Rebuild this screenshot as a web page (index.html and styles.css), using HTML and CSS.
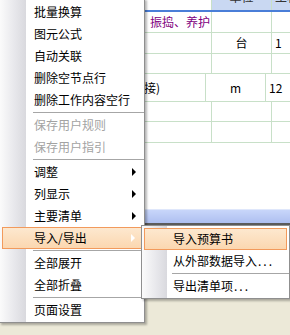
FILE: index.html
```html
<!DOCTYPE html>
<html lang="zh-CN">
<head>
  <meta charset="UTF-8">
  <title>清单菜单</title>
  <link rel="stylesheet" href="styles.css">
</head>
<body>

  <div class="sheet">
    <div class="row head">
      <div class="cell c0"></div>
      <div class="cell c1"></div>
      <div class="cell c2 hd"><span>单位</span></div>
      <div class="cell c3 hd"><span>工程</span></div>
    </div>
    <div class="row r1">
      <div class="cell c0"></div>
      <div class="cell c1 purple">振捣、养护</div>
      <div class="cell c2"></div>
      <div class="cell c3"></div>
    </div>
    <div class="row r2">
      <div class="cell c0"></div>
      <div class="cell c1"></div>
      <div class="cell c2 mid">台</div>
      <div class="cell c3">1</div>
    </div>
    <div class="row r3">
      <div class="cell c0"></div>
      <div class="cell c1"></div>
      <div class="cell c2"></div>
      <div class="cell c3"></div>
    </div>
    <div class="row r4">
      <div class="cell c0"></div>
      <div class="cell c1 flush">接)</div>
      <div class="cell c2 mid">m</div>
      <div class="cell c3">12</div>
    </div>
    <div class="row r5">
      <div class="cell c0"></div>
      <div class="cell c1"></div>
      <div class="cell c2"></div>
      <div class="cell c3"></div>
    </div>
    <div class="row r6">
      <div class="cell c0"></div>
      <div class="cell c1"></div>
      <div class="cell c2"></div>
      <div class="cell c3"></div>
    </div>
    <div class="blank"></div>
    <div class="scrollbar"></div>
  </div>

  <div class="menu main">
    <div class="item">批量换算</div>
    <div class="item">图元公式</div>
    <div class="item">自动关联</div>
    <div class="item">删除空节点行</div>
    <div class="item">删除工作内容空行</div>
    <div class="sep"></div>
    <div class="item disabled">保存用户规则</div>
    <div class="item disabled">保存用户指引</div>
    <div class="sep"></div>
    <div class="item sub">调整<i class="arrow"></i></div>
    <div class="item sub">列显示<i class="arrow"></i></div>
    <div class="item sub">主要清单<i class="arrow"></i></div>
    <div class="item sub hot">导入/导出<i class="arrow"></i></div>
    <div class="sep"></div>
    <div class="item">全部展开</div>
    <div class="item">全部折叠</div>
    <div class="sep"></div>
    <div class="item">页面设置</div>
  </div>

  <div class="menu submenu">
    <div class="item hot">导入预算书</div>
    <div class="item">从外部数据导入<span class="dots">...</span></div>
    <div class="sep"></div>
    <div class="item">导出清单项<span class="dots">...</span></div>
  </div>

</body>
</html>
```

FILE: styles.css
```css
body {
  margin: 0;
  background: #ece9d8;
  font-family: "Noto Sans CJK SC", "Liberation Sans", sans-serif;
  font-size: 12px;
  color: #000;
  position: relative;
  height: 335px;
  overflow: hidden;
}

/* spreadsheet behind the menus */
.sheet {
  background: #fff;
  width: 290px;
}

.row {
  display: flex;
  border-bottom: 1px solid #c8e0c8;
}

.cell {
  border-right: 1px solid #c8e0c8;
  line-height: 20px;
  white-space: nowrap;
  overflow: hidden;
}

.c0 { width: 144px; border-right: none; }
.c1 { width: 61px; padding-left: 6px; }
.c2 { width: 59px; }
.c3 { flex: 1; border-right: none; padding-left: 3px; }

.head {
  height: 10px;
  border-bottom: 2px solid #4a7ed8;
}

.head .cell { line-height: 10px; }

.hd {
  background: #c9d8f2;
  color: #333;
  text-align: center;
}

.hd span {
  display: block;
  margin-top: -8px;
}

.r1 { height: 20px; }
.r2 { height: 20px; }
.r3 { height: 19px; }
.r4 { height: 27px; }
.r4 .cell { line-height: 28px; }
.r5 { height: 19px; }
.r6 { height: 20px; }

.purple { color: #800080; }
.flush { padding-left: 0; }
.mid { text-align: center; }

.blank {
  height: 66px;
}

.scrollbar {
  height: 13px;
  background: linear-gradient(#c8d6fa, #aebff0);
  border-top: 1px solid #dfe7fb;
  border-bottom: 2px solid #5b5b5b;
}

/* popup menus */
.menu {
  position: absolute;
  background: linear-gradient(to right, #fbfbfb 0, #e8e8ec 14px, #d9d9de 26px, #fff 26px);
  border: 1px solid #8f8f8f;
  box-shadow: 2px 2px 2px rgba(0, 0, 0, 0.28);
}

.main {
  left: -1px;
  top: -2px;
  width: 144px;
  padding: 2px 0 1px;
}

.submenu {
  left: 141px;
  top: 225px;
  width: 147px;
  padding: 2px 0 1px;
  background: linear-gradient(to right, #fbfbfb 0, #e8e8ec 14px, #d9d9de 25px, #fff 25px);
}

.item {
  height: 22px;
  line-height: 22px;
  padding-left: 34px;
  padding-right: 8px;
  display: flex;
  align-items: center;
  justify-content: space-between;
  box-sizing: border-box;
}

.submenu .item {
  padding-left: 31px;
  justify-content: flex-start;
}

.disabled { color: #a3a3a3; }

.hot {
  margin: 0 2px;
  padding-left: 31px;
  padding-right: 6px;
  border: 1px solid #f29a5c;
  background: linear-gradient(#fde8cf, #fbd7b0);
}

.submenu .hot { padding-left: 28px; }

.arrow {
  width: 0;
  height: 0;
  border-left: 4px solid #000;
  border-top: 4px solid transparent;
  border-bottom: 4px solid transparent;
}

.hot .arrow { border-left-color: #fff; }

.sep {
  height: 3px;
  margin-left: 33px;
  background: linear-gradient(transparent 1px, #a6a6a6 1px, #a6a6a6 2px, transparent 2px);
}

.submenu .sep { margin-left: 30px; }

.dots { letter-spacing: 2px; margin-left: 1px; }
```
